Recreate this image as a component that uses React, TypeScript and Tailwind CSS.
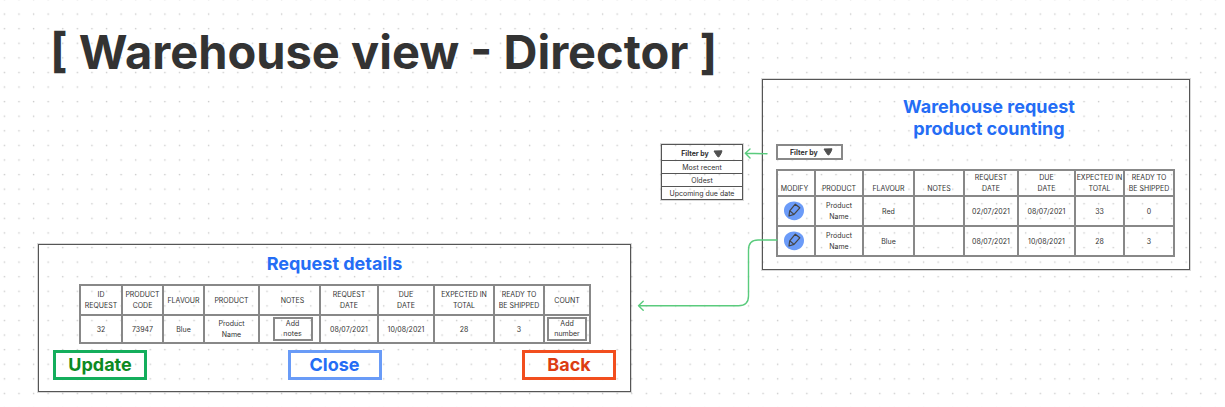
import type { ReactNode } from 'react';

const orderColumns = [
  { label: 'MODIFY', width: 'w-[38px] pr-[3px]' },
  { label: 'PRODUCT', width: 'w-[48px]' },
  { label: 'FLAVOUR', width: 'w-[51px]' },
  { label: 'NOTES', width: 'w-[50px]' },
  { label: 'REQUEST\nDATE', width: 'w-[54px]' },
  { label: 'DUE\nDATE', width: 'w-[57px]' },
  { label: 'EXPECTED IN\nTOTAL', width: 'w-[49px]' },
  { label: 'READY TO\nBE SHIPPED', width: 'w-[50px]' },
];

const orders = [
  ['Product\nName', 'Red', '', '02/07/2021', '08/07/2021', '33', '0'],
  ['Product\nName', 'Blue', '', '08/07/2021', '10/08/2021', '28', '3'],
];

const detailColumns = [
  { label: 'ID\nREQUEST', width: 'w-[42px]' },
  { label: 'PRODUCT\nCODE', width: 'w-[41px]' },
  { label: 'FLAVOUR', width: 'w-[41px]' },
  { label: 'PRODUCT', width: 'w-[55px]' },
  { label: 'NOTES', width: 'w-[61px] pl-[6px]' },
  { label: 'REQUEST\nDATE', width: 'w-[58px]' },
  { label: 'DUE\nDATE', width: 'w-[56px]' },
  { label: 'EXPECTED IN\nTOTAL', width: 'w-[60px]' },
  { label: 'READY TO\nBE SHIPPED', width: 'w-[50px]' },
  { label: 'COUNT', width: 'w-[46px]' },
];

const filters = ['Most recent', 'Oldest', 'Upcoming due date'];

function DotGrid() {
  return (
    <svg className="pointer-events-none absolute inset-0 h-full w-full" aria-hidden="true">
      <defs>
        <pattern id="dots" x="-3" y="6.7" width="14.59" height="14.59" patternUnits="userSpaceOnUse">
          <rect x="6.7" y="6.7" width="1.4" height="1.4" fill="#cacaca" />
        </pattern>
      </defs>
      <rect width="100%" height="100%" fill="url(#dots)" />
    </svg>
  );
}

function Connectors() {
  return (
    <svg
      className="pointer-events-none absolute top-0 left-0 h-[407px] w-[1225px]"
      fill="none"
      stroke="#5acb7d"
      strokeWidth="1.4"
      strokeLinecap="round"
      strokeLinejoin="round"
      aria-hidden="true"
    >
      <path d="M767 153.8 L745.5 153.2 M750 149 L745.3 153.2 L750 158" />
      <path d="M777 240 H758 Q748.5 240 748.5 250 V296 Q748.5 305.7 738.5 305.7 H638.5 M643.2 301.2 L638.5 305.7 L643.2 310.2" />
    </svg>
  );
}

function Triangle() {
  return (
    <svg viewBox="0 0 10 8" className="h-[8px] w-[10px] shrink-0" aria-hidden="true">
      <path d="M1 1 L9 .8 L7.8 4 L5.8 7 L4.6 6.6 Z" fill="#505050" stroke="#505050" strokeLinejoin="round" />
    </svg>
  );
}

function PencilButton() {
  return (
    <button type="button" aria-label="Modify request" className="ml-[5px] block">
      <svg viewBox="0 0 22 20" className="h-[20px] w-[22px]" fill="none" aria-hidden="true">
        <path
          d="M1 8.5 C1.5 3.5 6 .6 11 .5 C16.5 .5 20.8 4 21 9 C21.3 15 17 19 11.5 19.2 C5.5 19.3 .5 14.5 1 8.5 Z"
          fill="#6b9bf8"
        />
        <path
          d="M6 15 L6.7 9.8 L12.3 3.2 L16.8 6.8 L11 13.4 Z M6.7 9.8 L11 13.4"
          stroke="#444"
          strokeWidth="1.2"
          strokeLinejoin="round"
        />
      </svg>
    </button>
  );
}

function HeadCell({ children, className }: { children: ReactNode; className: string }) {
  return (
    <th scope="col" className={`border-2 border-[#888] font-normal whitespace-pre-line ${className}`}>
      {children}
    </th>
  );
}

function Cell({ children, className = '' }: { children?: ReactNode; className?: string }) {
  return <td className={`border-2 border-[#888] align-middle whitespace-pre-line ${className}`}>{children}</td>;
}

function EntryBox({ label, placeholder }: { label: string; placeholder: string }) {
  return (
    <textarea
      aria-label={label}
      placeholder={placeholder}
      rows={2}
      className="mx-auto block h-[24px] w-[40px] resize-none overflow-hidden border-2 border-[#888] text-center text-[7px] leading-[10px] placeholder:text-[#333]"
    />
  );
}

export default function App() {
  return (
    <main className="relative min-h-[407px] overflow-hidden bg-white font-['Inter',sans-serif] text-[7px] leading-[11px] text-[#333]">
      <DotGrid />

      <h1 className="absolute top-[22px] left-[50px] text-[47px] leading-[60px] font-bold whitespace-nowrap">
        [ Warehouse view - Director ]
      </h1>

      <section className="absolute top-[144px] left-[661px] w-[82px] border border-[#555] text-center shadow-[0_0_0_1px_rgba(0,0,0,0.15)]">
        <button type="button" aria-expanded="true" className="flex h-[15px] w-full items-center justify-center gap-1 pt-[2px] font-bold">
          Filter by <Triangle />
        </button>
        <ul>
          {filters.map((name) => (
            <li key={name} className="border-t border-[#555]">
              <button type="button" className="block h-[12px] w-full whitespace-nowrap">
                {name}
              </button>
            </li>
          ))}
        </ul>
      </section>

      <section className="absolute top-[79px] left-[762px] w-[428px] border border-[#555] px-[13px] pt-4 pb-3 shadow-[0_0_0_1px_rgba(0,0,0,0.15)]">
        <h2 className="pl-[26px] text-center text-[18px] leading-[22px] font-bold text-[#246df5]">
          Warehouse request
          <br />
          product counting
        </h2>
        <div className="relative mt-1 flex w-[67px] items-center border-2 border-[#888]">
          <select
            aria-label="Filter by"
            defaultValue=""
            className="h-[12px] w-full appearance-none bg-transparent pl-[12px] text-[7px] leading-[11px] font-bold"
          >
            <option value="">Filter by</option>
            {filters.map((name) => (
              <option key={name}>{name}</option>
            ))}
          </select>
          <span className="pointer-events-none absolute right-2">
            <Triangle />
          </span>
        </div>
        <table className="mt-[9px] w-[399px] table-fixed border-collapse text-center">
          <thead>
            <tr className="h-[26px]">
              {orderColumns.map((column) => (
                <HeadCell key={column.label} className={`pb-[1px] align-bottom ${column.width}`}>
                  {column.label}
                </HeadCell>
              ))}
            </tr>
          </thead>
          <tbody>
            {orders.map((order, row) => (
              <tr key={row} className="h-[30px]">
                <Cell>
                  <PencilButton />
                </Cell>
                {order.map((value, index) => (
                  <Cell key={index}>{value}</Cell>
                ))}
              </tr>
            ))}
          </tbody>
        </table>
      </section>

      <section className="absolute top-[244px] left-[38px] w-[593px] border border-[#555] px-[14px] pt-2 pb-[11px] shadow-[0_0_0_1px_rgba(0,0,0,0.15)]">
        <h2 className="text-center text-[18px] leading-[22px] font-bold text-[#246df5]">Request details</h2>
        <table className="mt-[9px] ml-[26px] w-[512px] table-fixed border-collapse text-center">
          <thead>
            <tr className="h-[30px]">
              {detailColumns.map((column) => (
                <HeadCell key={column.label} className={`align-middle ${column.width}`}>
                  {column.label}
                </HeadCell>
              ))}
            </tr>
          </thead>
          <tbody>
            <tr className="h-[28px]">
              <Cell>32</Cell>
              <Cell>73947</Cell>
              <Cell>Blue</Cell>
              <Cell>{'Product\nName'}</Cell>
              <Cell className="pl-[6px]">
                <EntryBox label="Notes" placeholder={'Add\nnotes'} />
              </Cell>
              <Cell>08/07/2021</Cell>
              <Cell>10/08/2021</Cell>
              <Cell>28</Cell>
              <Cell>3</Cell>
              <Cell>
                <EntryBox label="Count" placeholder={'Add\nnumber'} />
              </Cell>
            </tr>
          </tbody>
        </table>
        <div className="mt-[6px] flex justify-between text-[18px] leading-[24px] font-bold">
          <button type="button" className="w-[94px] border-[3px] border-[#14ae5c] text-[#0c8a22]">
            Update
          </button>
          <button type="button" className="w-[94px] border-[3px] border-[#699bf7] text-[#246df5]">
            Close
          </button>
          <button type="button" className="w-[94px] border-[3px] border-[#f24e1e] text-[#dc3c12]">
            Back
          </button>
        </div>
      </section>

      <Connectors />
    </main>
  );
}
